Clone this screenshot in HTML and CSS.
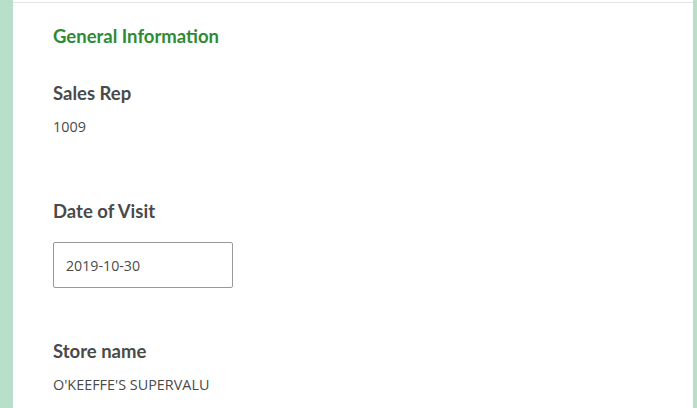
FILE: index.html
```html
<!DOCTYPE html>
<html>
<head>
<meta charset="utf-8">
<link rel="stylesheet" href="styles.css">
</head>
<body>
<div class="frame">
  <div class="panel">
    <div class="panel-inner">
      <h2 class="section-title">General Information</h2>
      <div class="field">
        <div class="label">Sales Rep</div>
        <div class="value">1009</div>
      </div>
      <div class="field field-date">
        <div class="label">Date of Visit</div>
        <div class="input">2019-10-30</div>
      </div>
      <div class="field field-store">
        <div class="label">Store name</div>
        <div class="value value-store">O'KEEFFE'S SUPERVALU</div>
      </div>
    </div>
  </div>
</div>
</body>
</html>
```
FILE: styles.css
```css
html, body {
  margin: 0;
  padding: 0;
  height: 100%;
}
body {
  font-family: Lato, "Noto Sans", sans-serif;
  background: #b7dfc9;
  overflow: hidden;
}
.frame {
  display: flex;
  height: 100%;
  padding: 0 4px 0 13px;
  box-sizing: border-box;
}
.panel {
  flex: 1;
  background: #fff;
  padding-top: 2px;
}
.panel-inner {
  border-top: 1px solid #e3e3e3;
  padding: 23px 40px 0 40px;
}
.section-title {
  margin: 0;
  font-size: 18.5px;
  font-weight: 700;
  color: #2f8a34;
  line-height: 20px;
}
.field {
  margin-top: 36px;
}
.label {
  font-size: 18.5px;
  font-weight: 700;
  color: #4a4a4a;
  line-height: 22px;
}
.value {
  margin-top: 15px;
  font-family: "Open Sans", sans-serif;
  font-size: 14.4px;
  color: #4a4a4a;
  line-height: 16px;
}
.value-store {
  margin-top: 15px;
}
.field-date {
  margin-top: 65px;
}
.input {
  margin-top: 20px;
  width: 180px;
  height: 46px;
  box-sizing: border-box;
  border: 1px solid #999;
  border-radius: 2px;
  padding: 0 12px;
  display: flex;
  align-items: center;
  font-family: "Open Sans", sans-serif;
  font-size: 14.2px;
  color: #4a4a4a;
}
.field-store {
  margin-top: 52px;
}
```
